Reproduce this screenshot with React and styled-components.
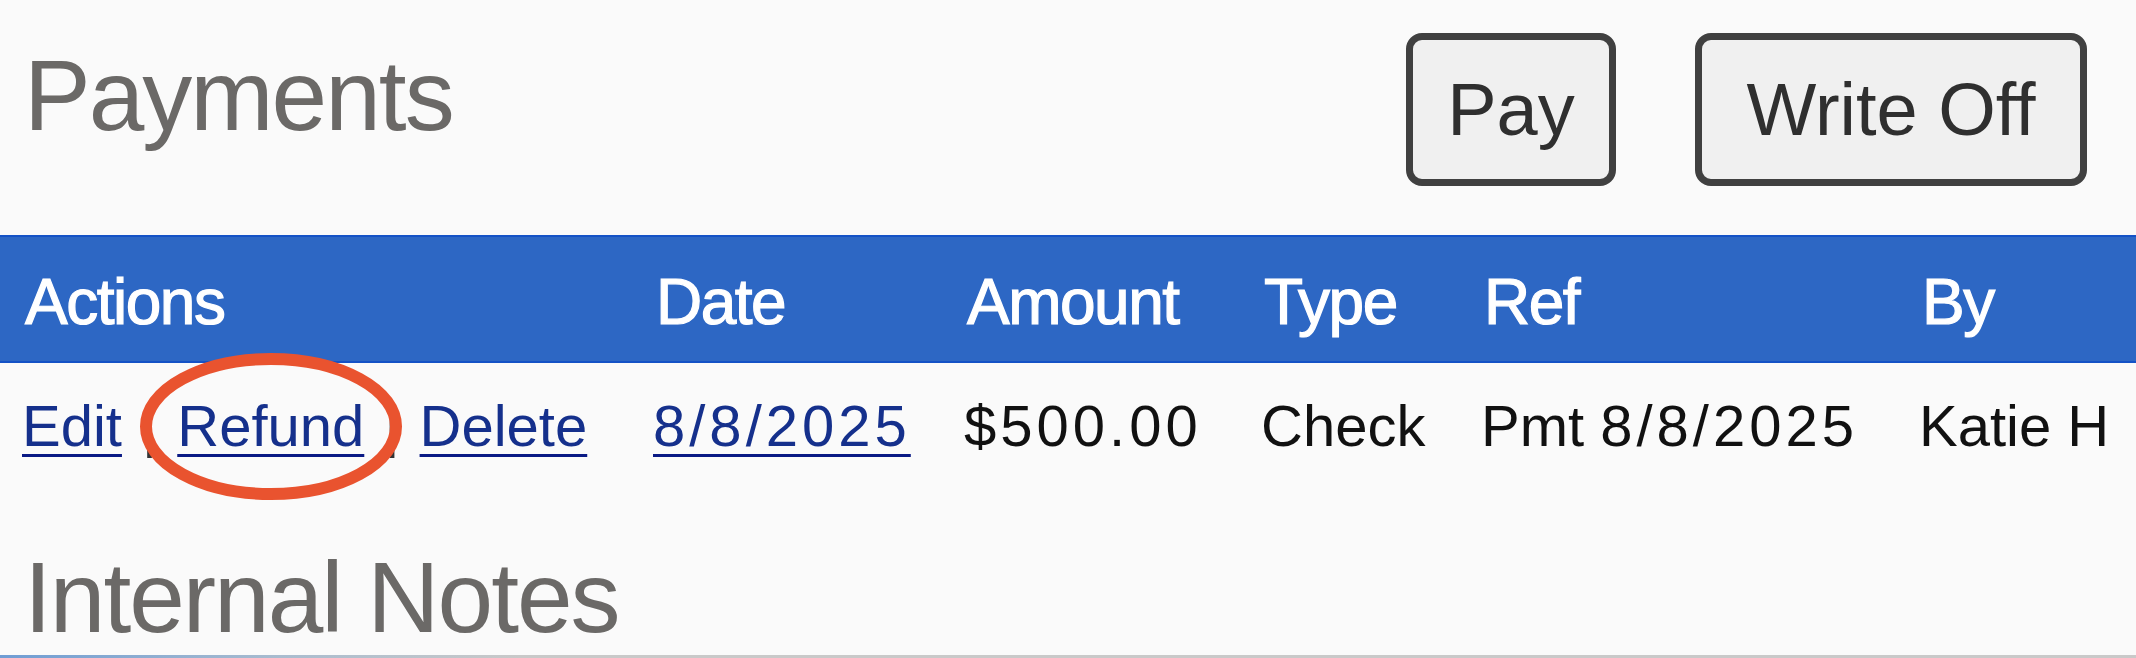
import React from "react"
import styled, { createGlobalStyle } from "styled-components"

const GlobalStyle = createGlobalStyle`
  html, body {
    margin: 0;
    padding: 0;
    background: #fafafa;
  }
  body {
    font-family: "Liberation Sans", Arial, sans-serif;
    overflow: hidden;
  }
`

const columns = "631px 311px 297px 220px 438px 1fr"

function App() {
  return (
    <Page>
      <GlobalStyle />
      <TopBar>
        <SectionTitle $top={45}>Payments</SectionTitle>
        <ButtonGroup>
          <ActionButton $width={210}>Pay</ActionButton>
          <ActionButton $width={392}>Write Off</ActionButton>
        </ButtonGroup>
      </TopBar>

      <HeaderRow>
        <HeaderCell>Actions</HeaderCell>
        <HeaderCell>Date</HeaderCell>
        <HeaderCell>Amount</HeaderCell>
        <HeaderCell>Type</HeaderCell>
        <HeaderCell>Ref</HeaderCell>
        <HeaderCell>By</HeaderCell>
      </HeaderRow>
      <DataRow>
        <DataCell>
          <TableLink href="#">Edit</TableLink>
          <Divider>{" | "}</Divider>
          <Circled>
            <TableLink href="#">Refund</TableLink>
            <Ring width="262" height="147" viewBox="0 0 262 147">
              <ellipse
                cx="131"
                cy="73.5"
                rx="125"
                ry="67.5"
                fill="none"
                stroke="#e9532f"
                strokeWidth="12"
              />
            </Ring>
          </Circled>
          <Divider>{" | "}</Divider>
          <TableLink href="#">Delete</TableLink>
        </DataCell>
        <DataCell>
          <TableLink href="#">
            <Digits>8/8/2025</Digits>
          </TableLink>
        </DataCell>
        <DataCell>
          <Digits>$500.00</Digits>
        </DataCell>
        <DataCell>Check</DataCell>
        <DataCell>
          Pmt <Digits>8/8/2025</Digits>
        </DataCell>
        <DataCell>Katie H</DataCell>
      </DataRow>

      <NotesTitle>Internal Notes</NotesTitle>
      <BottomEdge />
    </Page>
  )
}

export default App

const Page = styled.div`
  width: 2136px;
  height: 658px;
  overflow: hidden;
  background: #fafafa;
`

const TopBar = styled.div`
  display: flex;
  justify-content: space-between;
  align-items: flex-start;
  height: 235px;
  padding: 0 49px 0 24px;
  box-sizing: border-box;
`

const SectionTitle = styled.h2`
  margin: ${(p) => p.$top}px 0 0;
  font-size: 100px;
  line-height: 100px;
  font-weight: 400;
  letter-spacing: -2px;
  color: #6b6967;
`

const NotesTitle = styled(SectionTitle)`
  margin: 62px 0 0 24px;
`

const ButtonGroup = styled.div`
  display: flex;
  gap: 79px;
  margin-top: 33px;
`

const ActionButton = styled.button`
  width: ${(p) => p.$width}px;
  height: 153px;
  padding: 0;
  box-sizing: border-box;
  border: 7px solid #404040;
  border-radius: 16px;
  background: #f0f0f0;
  font-family: "Liberation Sans", Arial, sans-serif;
  font-size: 74px;
  color: #2f2f2f;
`

const HeaderRow = styled.div`
  display: grid;
  grid-template-columns: ${columns};
  align-items: center;
  height: 128px;
  box-sizing: border-box;
  background: #2d67c4;
  border-top: 2px solid #1452c6;
  border-bottom: 2px solid #1452c6;
`

const HeaderCell = styled.div`
  padding: 6px 0 0 25px;
  font-size: 64px;
  line-height: 64px;
  color: #fff;
  letter-spacing: -1.5px;
  -webkit-text-stroke: 1.2px #fff;
  white-space: nowrap;
`

const DataRow = styled.div`
  display: grid;
  grid-template-columns: ${columns};
  align-items: center;
  height: 122px;
`

const DataCell = styled.div`
  padding: 3px 0 0 22px;
  font-size: 58px;
  line-height: 58px;
  color: #111;
  white-space: pre;
`

const Digits = styled.span`
  letter-spacing: 4px;
`

const TableLink = styled.a`
  color: #15308c;
  text-decoration: underline;
  text-decoration-color: #0a1a85;
  text-decoration-thickness: 3px;
  text-underline-offset: 8px;
`

const Divider = styled.span`
  margin: 0 4px;
  color: #333;
`

const Circled = styled.span`
  position: relative;
  display: inline-block;
`

const Ring = styled.svg`
  position: absolute;
  left: 50%;
  top: -44px;
  transform: translateX(-50%);
  pointer-events: none;
`

const BottomEdge = styled.div`
  margin-top: 8px;
  height: 3px;
  background: linear-gradient(to right, #6f9dd4 0, #a9bccf 280px, #c9c9c9 520px);
`
